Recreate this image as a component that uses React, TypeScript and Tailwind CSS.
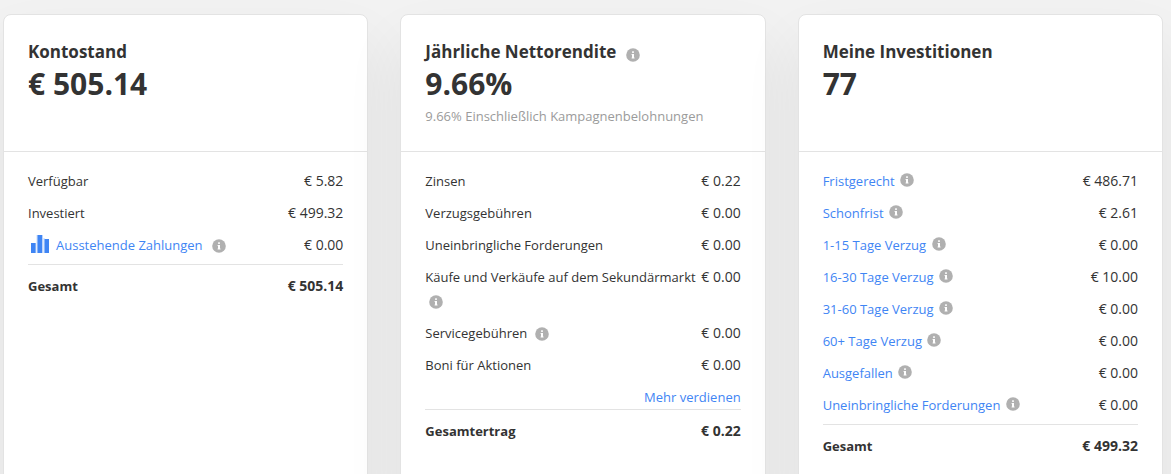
import clsx from 'clsx';

type Row = {
  label: string;
  value: string;
  link?: boolean;
  info?: boolean;
  chart?: boolean;
};

const balance: Row[] = [
  { label: 'Verfügbar', value: '€ 5.82' },
  { label: 'Investiert', value: '€ 499.32' },
  { label: 'Ausstehende Zahlungen', value: '€ 0.00', link: true, info: true, chart: true },
];

const returns: Row[] = [
  { label: 'Zinsen', value: '€ 0.22' },
  { label: 'Verzugsgebühren', value: '€ 0.00' },
  { label: 'Uneinbringliche Forderungen', value: '€ 0.00' },
  { label: 'Käufe und Verkäufe auf dem Sekundärmarkt', value: '€ 0.00', info: true },
  { label: 'Servicegebühren', value: '€ 0.00', info: true },
  { label: 'Boni für Aktionen', value: '€ 0.00' },
];

const investments: Row[] = [
  { label: 'Fristgerecht', value: '€ 486.71', link: true, info: true },
  { label: 'Schonfrist', value: '€ 2.61', link: true, info: true },
  { label: '1-15 Tage Verzug', value: '€ 0.00', link: true, info: true },
  { label: '16-30 Tage Verzug', value: '€ 10.00', link: true, info: true },
  { label: '31-60 Tage Verzug', value: '€ 0.00', link: true, info: true },
  { label: '60+ Tage Verzug', value: '€ 0.00', link: true, info: true },
  { label: 'Ausgefallen', value: '€ 0.00', link: true, info: true },
  { label: 'Uneinbringliche Forderungen', value: '€ 0.00', link: true, info: true },
];

function InfoIcon({ className }: { className?: string }) {
  return (
    <svg viewBox="0 0 14 14" className={clsx('inline-block size-3.5', className)} aria-hidden="true">
      <circle cx="7" cy="7" r="6.8" fill="#b0b0b0" />
      <rect x="6" y="3.4" width="2" height="1.4" fill="#fff" />
      <path d="M5.6 6H8v3.6h.5v.9H5.6v-.9H6V6.9h-.4z" fill="#fff" />
    </svg>
  );
}

function ChartIcon() {
  return (
    <svg viewBox="0 0 20 20" className="mr-1.5 ml-0.5 inline-block size-5 align-[-4px]" aria-hidden="true">
      <path d="M5 9h1v10H5zM6.6 1h1v18h-1zM12 1h1v18h-1zM13.5 4h1v15h-1z" fill="#bcd4fb" />
      <path d="M1 9h4.5v10H1zM7.5 1H12v18H7.5zM14.5 5H19v14h-4.5z" fill="#3f85f4" />
    </svg>
  );
}

type CardProps = {
  title: string;
  amount: string;
  note?: string;
  titleInfo?: boolean;
  rows: Row[];
  more?: string;
  totalLabel: string;
  total: string;
  infoClass: string;
};

function Card({ title, amount, note, titleInfo, rows, more, totalLabel, total, infoClass }: CardProps) {
  return (
    <section className="rounded-lg border border-[#e3e3e3] bg-white shadow-[0_30px_60px_rgba(0,0,0,0.07)]">
      <header className="h-[137px] border-b border-[#e3e3e3] px-6 pt-6">
        <h2 className="text-[17px] leading-[25px] font-bold">
          {title}
          {titleInfo && <InfoIcon className="ml-2.5 align-[-4px]" />}
        </h2>
        <p className="text-[30px] leading-10 font-bold">{amount}</p>
        {note && <p className="text-[13px] leading-6 text-[#9b9b9b]">{note}</p>}
      </header>
      <div className="px-6 pt-[9px] pb-12">
        <table className="w-full text-[13px] leading-6">
          <tbody>
            {rows.map((row) => (
              <tr key={row.label} className="align-top">
                <th scope="row" className="pt-2 text-left font-normal">
                  {row.chart && <ChartIcon />}
                  {row.link ? <a href="#" className="text-[#3f85f4]">{row.label}</a> : row.label}
                  {row.info && <> <InfoIcon className={infoClass} /></>}
                </th>
                <td className="pt-2 text-right text-sm leading-6 whitespace-nowrap">{row.value}</td>
              </tr>
            ))}
            {more ? (
              <tr>
                <td colSpan={2} className="pt-2 text-right">
                  <a href="#" className="text-[#3f85f4]">{more}</a>
                </td>
              </tr>
            ) : (
              <tr aria-hidden="true">
                <td colSpan={2} className="h-[7px]" />
              </tr>
            )}
          </tbody>
          <tfoot className="border-t border-[#e3e3e3] font-bold">
            <tr>
              <th scope="row" className="pt-[9px] text-left">{totalLabel}</th>
              <td className="pt-[9px] text-right text-sm leading-6 whitespace-nowrap">{total}</td>
            </tr>
          </tfoot>
        </table>
      </div>
    </section>
  );
}

export default function App() {
  return (
    <main className="bg-[#f2f2f2] pt-3.5 pr-2 pl-[3px] font-['Open_Sans',sans-serif] text-[#333]">
      <div className="grid grid-cols-3 gap-8">
        <Card
          title="Kontostand"
          amount="€ 505.14"
          rows={balance}
          totalLabel="Gesamt"
          total="€ 505.14"
          infoClass="ml-1.5 align-[-3px]"
        />
        <Card
          title="Jährliche Nettorendite"
          titleInfo
          amount="9.66%"
          note="9.66% Einschließlich Kampagnenbelohnungen"
          rows={returns}
          more="Mehr verdienen"
          totalLabel="Gesamtertrag"
          total="€ 0.22"
          infoClass="ml-1 align-[-3px]"
        />
        <Card
          title="Meine Investitionen"
          amount="77"
          rows={investments}
          totalLabel="Gesamt"
          total="€ 499.32"
          infoClass="ml-0.5 align-[-1px]"
        />
      </div>
    </main>
  );
}
